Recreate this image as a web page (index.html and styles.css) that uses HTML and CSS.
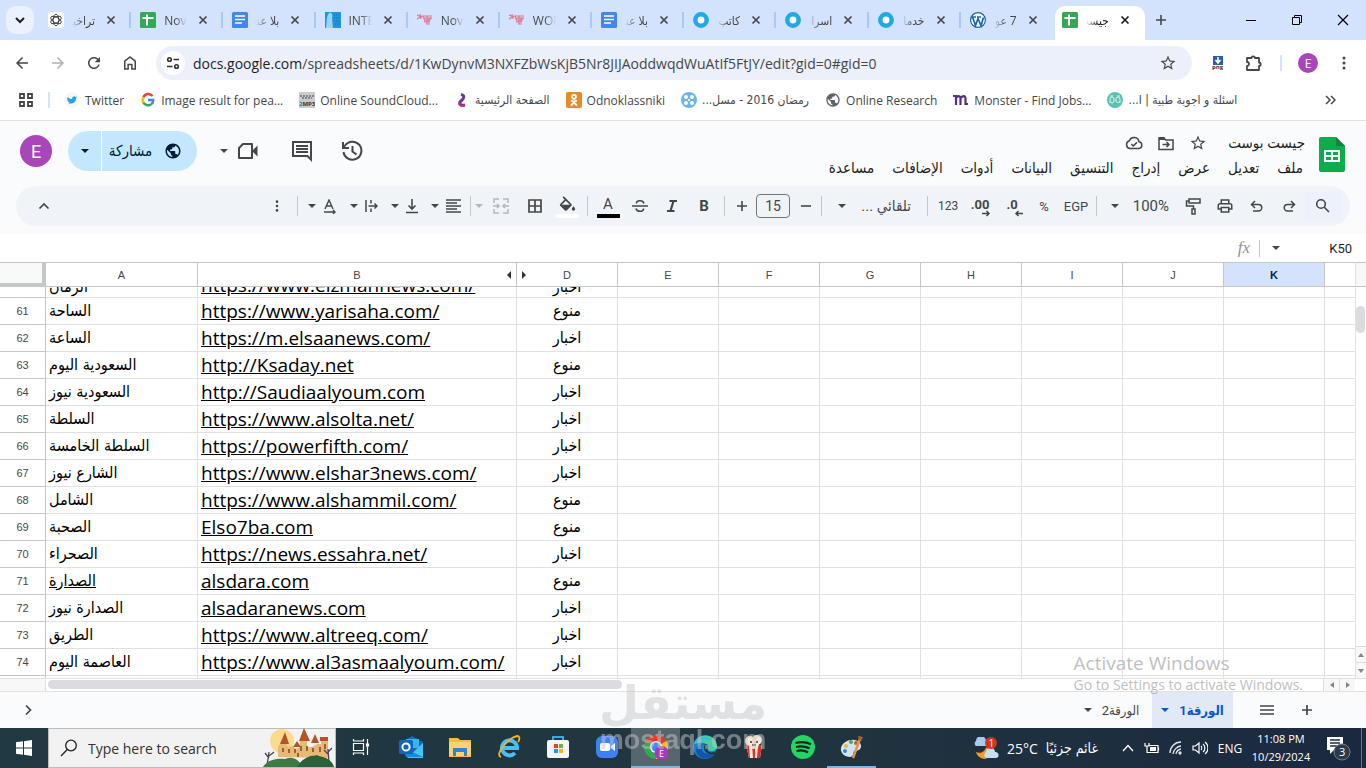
FILE: index.html
```html
<!DOCTYPE html>
<html lang="ar">
<head>
    <meta charset="UTF-8">
    <meta name="viewport" content="width=device-width, initial-scale=1.0">
    <title>جيست بوست</title>
    <link rel="stylesheet" href="styles.css">
</head>
<body>
    <!-- Shared icons -->
    <svg class="sprite" aria-hidden="true">
        <symbol id="close" viewBox="0 0 16 16"><path d="M4.500 4.500l7 7M11.500 4.500l-7 7" fill="none" stroke="currentColor" stroke-width="1.700"/></symbol>
        <symbol id="caret" viewBox="0 0 8 8"><path d="M0 2h8L4 6z" fill="currentColor"/></symbol>
        <symbol id="sheets" viewBox="0 0 16 16"><rect width="16" height="16" rx="1.500" fill="#34a853"/><path d="M7 2.500v11M2.500 6h11" stroke="#fff" stroke-width="2"/></symbol>
        <symbol id="docs" viewBox="0 0 16 16"><rect width="16" height="16" rx="1.500" fill="#4285f4"/><path d="M3 4h10M3 7.500h10M3 11h7" stroke="#fff" stroke-width="1.700"/></symbol>
        <symbol id="ring" viewBox="0 0 16 16"><circle cx="8" cy="8" r="5.700" fill="#fff" stroke="#20a9e6" stroke-width="4.500"/></symbol>
        <symbol id="scrawl" viewBox="0 0 16 16"><path d="M0 3l5 2M0 7l5-3M3 2l1 5M5 4h10M6 6h9l-3 1M6 4l2 5M8 8h6M7 10l6-1M9 12h4M10 4v8M12 6v5" fill="none" stroke="#e0788c" stroke-width="1.200"/></symbol>
        <symbol id="star" viewBox="0 0 24 24"><path fill="currentColor" d="M22 9.240l-7.190-.62L12 2 9.190 8.630 2 9.240l5.460 4.730L5.820 21 12 17.270 18.180 21l-1.630-7.030L22 9.240zM12 15.400l-3.760 2.270 1-4.280-3.320-2.880 4.380-.38L12 6.100l1.710 4.040 4.380.38-3.320 2.880 1 4.280L12 15.400z"/></symbol>
        <symbol id="globe" viewBox="0 0 24 24"><path fill="currentColor" d="M12 2C6.480 2 2 6.480 2 12s4.480 10 10 10 10-4.480 10-10S17.520 2 12 2zm-1 17.930c-3.950-.49-7-3.850-7-7.930 0-.62.08-1.210.21-1.790L9 15v1c0 1.100.9 2 2 2v1.930zm6.900-2.540c-.26-.81-1-1.390-1.900-1.390h-1v-3c0-.55-.45-1-1-1H8v-2h2c.55 0 1-.45 1-1V7h2c1.100 0 2-.9 2-2v-.41c2.930 1.190 5 4.060 5 7.410 0 2.080-.8 3.970-2.100 5.390z"/></symbol>
        <symbol id="dots" viewBox="0 0 16 16"><g fill="currentColor"><circle cx="8" cy="3" r="1.500"/><circle cx="8" cy="8" r="1.500"/><circle cx="8" cy="13" r="1.500"/></g></symbol>
    </svg>

    <!-- Browser tabs -->
    <div class="tabstrip">
        <button class="tab-search" aria-label="Search tabs"><svg width="16" height="16" viewBox="0 0 16 16"><path d="M4 6l4 4 4-4" fill="none" stroke="#1f1f1f" stroke-width="2"/></svg></button>
        <div class="tabs">
            <div class="tab"><svg class="fav" viewBox="0 0 16 16"><rect width="16" height="16" rx="2.500" fill="#fff"/><g fill="none" stroke="#222" stroke-width=".8"><ellipse cx="8" cy="8" rx="2.800" ry="5.800"/><ellipse cx="8" cy="8" rx="2.800" ry="5.800" transform="rotate(60 8 8)"/><ellipse cx="8" cy="8" rx="2.800" ry="5.800" transform="rotate(120 8 8)"/></g></svg><span class="tab-title" dir="rtl">تراخيص</span><button aria-label="Close"><svg><use href="#close"/></svg></button></div>
            <div class="tab"><svg class="fav"><use href="#sheets"/></svg><span class="tab-title">Novem</span><button aria-label="Close"><svg><use href="#close"/></svg></button></div>
            <div class="tab"><svg class="fav"><use href="#docs"/></svg><span class="tab-title" dir="rtl">بلا عنوان</span><button aria-label="Close"><svg><use href="#close"/></svg></button></div>
            <div class="tab"><svg class="fav" viewBox="0 0 16 16"><rect width="16" height="16" fill="#2196dd"/><path d="M1 16C2 10 1 5 4 1c3-1 4 2 3 5l1 10z" fill="#9bd4f5"/><path d="M9 3h6M9 6h6M9 9h6M10 12h5" stroke="#0c6cb0" stroke-dasharray="1 1"/></svg><span class="tab-title">INTER</span><button aria-label="Close"><svg><use href="#close"/></svg></button></div>
            <div class="tab"><svg class="fav"><use href="#scrawl"/></svg><span class="tab-title">Novem</span><button aria-label="Close"><svg><use href="#close"/></svg></button></div>
            <div class="tab"><svg class="fav"><use href="#scrawl"/></svg><span class="tab-title">WORK</span><button aria-label="Close"><svg><use href="#close"/></svg></button></div>
            <div class="tab"><svg class="fav"><use href="#docs"/></svg><span class="tab-title" dir="rtl">بلا عنوان</span><button aria-label="Close"><svg><use href="#close"/></svg></button></div>
            <div class="tab"><svg class="fav"><use href="#ring"/></svg><span class="tab-title" dir="rtl">كاتب</span><button aria-label="Close"><svg><use href="#close"/></svg></button></div>
            <div class="tab"><svg class="fav"><use href="#ring"/></svg><span class="tab-title" dir="rtl">اسراء</span><button aria-label="Close"><svg><use href="#close"/></svg></button></div>
            <div class="tab"><svg class="fav"><use href="#ring"/></svg><span class="tab-title" dir="rtl">خدمات</span><button aria-label="Close"><svg><use href="#close"/></svg></button></div>
            <div class="tab last"><svg class="fav" viewBox="0 0 16 16"><circle cx="8" cy="8" r="7.400" fill="#fff" stroke="#1765ad" stroke-width="1.200"/><path d="M2.500 5l3 8.500L8 6.500l3 7 2.500-8M2 5h4M7 5h4" fill="none" stroke="#1765ad" stroke-width="1.700"/></svg><span class="tab-title" dir="rtl">7 عوامل</span><button aria-label="Close"><svg><use href="#close"/></svg></button></div>
            <div class="tab active"><svg class="fav"><use href="#sheets"/></svg><span class="tab-title" dir="rtl">جيست</span><button aria-label="Close"><svg><use href="#close"/></svg></button></div>
        </div>
        <button class="new-tab" aria-label="New tab"><svg width="16" height="16" viewBox="0 0 16 16"><path d="M8 3v10M3 8h10" stroke="#474747" stroke-width="1.600"/></svg></button>
        <div class="win-controls">
            <button aria-label="Minimize"><svg width="12" height="12"><path d="M1 6.500h10" stroke="#000"/></svg></button>
            <button aria-label="Restore"><svg width="12" height="12"><path d="M1.500 3.500h7v7h-7zM3.500 3.500v-2h7v7h-2" fill="none" stroke="#000"/></svg></button>
            <button aria-label="Close window"><svg width="12" height="12"><path d="M1 1l10 10M11 1L1 11" stroke="#000" stroke-width="1.200"/></svg></button>
        </div>
    </div>

    <!-- Address bar -->
    <div class="navbar">
        <button class="nav-btn" aria-label="Back"><svg viewBox="0 0 24 24"><path fill="currentColor" d="M20 11H7.830l5.590-5.590L12 4l-8 8 8 8 1.410-1.410L7.830 13H20z"/></svg></button>
        <button class="nav-btn off" aria-label="Forward"><svg viewBox="0 0 24 24"><path fill="currentColor" d="M4 11h12.170l-5.590-5.590L12 4l8 8-8 8-1.410-1.410L16.170 13H4z"/></svg></button>
        <button class="nav-btn" aria-label="Reload"><svg viewBox="0 0 24 24"><path fill="currentColor" d="M17.650 6.350C16.200 4.900 14.210 4 12 4c-4.420 0-7.990 3.580-7.990 8s3.570 8 7.990 8c3.730 0 6.840-2.550 7.730-6h-2.080c-.82 2.330-3.040 4-5.650 4-3.310 0-6-2.690-6-6s2.690-6 6-6c1.660 0 3.140.69 4.220 1.780L13 11h7V4z"/></svg></button>
        <button class="nav-btn" aria-label="Home"><svg viewBox="0 0 24 24"><path d="M5 20V9.500L12 4l7 5.500V20h-4.500v-6h-5v6z" fill="none" stroke="currentColor" stroke-width="2"/></svg></button>
        <div class="omnibox">
            <button class="site-info" aria-label="Site information"><svg width="16" height="16" viewBox="0 0 16 16" fill="none" stroke="#333" stroke-width="1.600"><circle cx="4.500" cy="4.500" r="1.800"/><path d="M8.500 4.500H14M2 11.500h5.500"/><circle cx="11.500" cy="11.500" r="1.800"/></svg></button>
            <span class="url" dir="ltr"><b>docs.google.com</b>/spreadsheets/d/1KwDynvM3NXFZbWsKjB5Nr8JIJAoddwqdWuAtIf5FtJY/edit?gid=0#gid=0</span>
            <button class="plain" aria-label="Bookmark"><svg width="18" height="18"><use href="#star"/></svg></button>
        </div>
        <button class="ext" aria-label="Save as PNG"><svg width="14" height="16" viewBox="0 0 14 16"><rect x="2" y="1" width="10" height="9" fill="#2d5fa8"/><path d="M7 2v5M4.500 5L7 8l2.500-3" fill="none" stroke="#fff" stroke-width="1.600"/><text x="1" y="14" font-size="6" font-weight="700" fill="#334">png</text></svg></button>
        <button class="ext" aria-label="Extensions"><svg width="20" height="20" viewBox="0 0 20 20"><path d="M3 5h4.500a1.700 1.700 0 013.400 0H15v4.500a1.700 1.700 0 010 3.400V17H3v-4a2 2 0 000-4z" fill="none" stroke="#474747" stroke-width="1.800" stroke-linejoin="round"/></svg></button>
        <span class="nav-sep"></span>
        <button class="profile" aria-label="Profile">E</button>
        <button class="plain" aria-label="Menu"><svg width="16" height="16"><use href="#dots"/></svg></button>
    </div>

    <!-- Bookmarks -->
    <nav class="bookmarks">
        <button class="plain" aria-label="Tab groups"><svg width="16" height="16" viewBox="0 0 16 16" fill="none" stroke="#474747" stroke-width="1.800"><path d="M2 2h4v4H2zM10 2h4v4h-4zM2 10h4v4H2zM10 10h4v4h-4z"/></svg></button>
        <span class="nav-sep"></span>
        <a href="#"><svg class="fav" viewBox="0 0 16 16"><circle cx="8" cy="8" r="8" fill="#f5f7f8"/><path d="M3.500 5c1.500 1.500 3 2 4.500 2 0-3 2.500-3.200 3.500-2l1.500-.5-1 2c0 4.500-4.500 6-8 4.500l1.500-.8C4 9.500 3.500 9 3.500 8c-.5-1-.3-2 0-3z" fill="#26a4e8"/></svg><span>Twitter</span></a>
        <a href="#"><svg class="fav" viewBox="0 0 16 16" fill="none" stroke-width="2.500"><path d="M12.500 4A5.300 5.300 0 003.400 5.300" stroke="#ea4335"/><path d="M3.400 5.300a5.300 5.300 0 000 5.400" stroke="#fbbc05"/><path d="M3.400 10.700a5.300 5.300 0 008 1.400" stroke="#34a853"/><path d="M11.400 12.100A5 5 0 0013.200 8H8" stroke="#4285f4"/></svg><span>Image result for pea...</span></a>
        <a href="#"><svg class="fav" viewBox="0 0 16 16"><rect width="16" height="16" fill="#c9cbce"/><path d="M1 4h14M3 6h10" stroke="#444" stroke-width="1.200" stroke-dasharray="2 1"/><text x="0" y="14" font-size="6" font-weight="700" fill="#2b78b8">2<tspan fill="#333">MP3</tspan></text></svg><span>Online SoundCloud...</span></a>
        <a href="#"><svg class="fav" viewBox="0 0 16 16"><path d="M7 2.500c5 1 2 5 0 6.500s-2 5 4 4" fill="none" stroke="#69399a" stroke-width="3"/><path d="M5 11c0 3 3 4 6 2" fill="none" stroke="#c1388a" stroke-width="2"/></svg><span dir="rtl" class="ar">الصفحة الرئيسية</span></a>
        <a href="#"><svg class="fav" viewBox="0 0 16 16"><rect width="16" height="16" rx="2" fill="#e88b25"/><g fill="none" stroke="#fff" stroke-width="1.800"><circle cx="8" cy="4.800" r="2"/><path d="M5 8.500c2 1.300 4 1.300 6 0M5 13.500l3-3 3 3"/></g></svg><span>Odnoklassniki</span></a>
        <a href="#"><svg class="fav" viewBox="0 0 16 16"><circle cx="8" cy="8" r="8" fill="#6fb4e8"/><g fill="#fff"><circle cx="5" cy="5" r="2"/><circle cx="11" cy="5" r="2"/><circle cx="5" cy="11" r="2"/><circle cx="11" cy="11" r="2"/><circle cx="8" cy="8" r="1"/></g></svg><span dir="rtl" class="ar">رمضان 2016 - مسل...</span></a>
        <a href="#"><svg class="fav globe"><use href="#globe"/></svg><span>Online Research</span></a>
        <a href="#"><svg class="fav" viewBox="0 0 16 16"><path d="M0 4h3v9M3 6c1-2 4-3 4.500 0v7M8 6c1-2 4-3 4.500 0v6H15" fill="none" stroke="#52308c" stroke-width="2.200"/></svg><span>Monster - Find Jobs...</span></a>
        <a href="#"><svg class="fav" viewBox="0 0 16 16"><circle cx="8" cy="8" r="8" fill="#59c2b3"/><path d="M3 11V7a2 2 0 014 0v2a2 2 0 01-4 0M9 9V7a2 2 0 014 0v4M9 8a2 2 0 004 1M3 4h3M10 4h3" fill="none" stroke="#d9f2ee"/></svg><span dir="rtl" class="ar">اسئلة و اجوبة طبية | ا...</span></a>
        <button class="plain more-marks" aria-label="More bookmarks"><svg width="12" height="12" viewBox="0 0 12 12"><path d="M2 2l4 4-4 4M7 2l4 4-4 4" fill="none" stroke="#474747" stroke-width="1.500"/></svg></button>
    </nav>

    <!-- Document header -->
    <header class="doc-header" dir="rtl">
        <div class="doc-top">
            <svg class="logo" width="26" height="35" viewBox="0 0 26 35"><path d="M2 0h15l9 9v24a2 2 0 01-2 2H2a2 2 0 01-2-2V2a2 2 0 012-2z" fill="#0cac4b"/><path d="M17 0l9 9h-9z" fill="#11833b"/><path d="M5 13h16v12H5z" fill="#fff"/><path d="M7 15h5v3H7zM14 15h5v3h-5zM7 20h5v3H7zM14 20h5v3h-5z" fill="#0cac4b"/></svg>
            <div class="doc-info">
                <div class="doc-title">
                    <h1>جيست بوست</h1>
                    <button class="plain" aria-label="تمييز بنجمة"><svg width="18" height="18"><use href="#star"/></svg></button>
                    <button class="plain" aria-label="نقل"><svg width="18" height="18" viewBox="0 0 18 18"><path d="M2 4h5l1.500 2H16v9.500H2zM5.500 10.500H12M9.500 8l2.500 2.500L9.500 13" fill="none" stroke="currentColor" stroke-width="1.500"/><path d="M2 3h5l2 3H2z" fill="currentColor"/></svg></button>
                    <button class="plain" aria-label="حالة المستند"><svg width="18" height="18" viewBox="0 0 18 18"><path d="M5 14.500a4 4 0 01-.6-7.800A5 5 0 0114 7.800a3.400 3.400 0 010 6.700zM6.300 10l2 2 3.600-3.600" fill="none" stroke="currentColor" stroke-width="1.500"/></svg></button>
                </div>
                <nav class="menus">
                    <button>ملف</button><button>تعديل</button><button>عرض</button><button>إدراج</button><button>التنسيق</button><button>البيانات</button><button>أدوات</button><button>الإضافات</button><button>مساعدة</button>
                </nav>
            </div>
            <div class="doc-actions">
                <button class="plain" aria-label="سجل الإصدارات"><svg width="24" height="24" viewBox="0 0 24 24" fill="none" stroke="currentColor" stroke-width="2"><path d="M3.500 13a9 9 0 101.500-6.500L3 9M3 3v6h6"/><path d="M12.500 7v5.500l4 3"/></svg></button>
                <button class="plain" aria-label="التعليقات"><svg width="24" height="24" viewBox="0 0 24 24"><path d="M3 3h18v17.500L17.500 17H3z" fill="none" stroke="currentColor" stroke-width="2"/><path d="M6 7h12M6 10h12M6 13h12" stroke="currentColor" stroke-width="2"/></svg></button>
                <button class="plain meet" aria-label="مكالمة"><svg width="24" height="24" viewBox="0 0 24 24"><path d="M7 5h9v14H3V9z" fill="none" stroke="currentColor" stroke-width="2" stroke-linejoin="round"/><path d="M16 12l5.500-5.500v11z" fill="currentColor"/></svg><svg class="caret"><use href="#caret"/></svg></button>
                <div class="share">
                    <button class="share-main"><svg width="18" height="18"><use href="#globe"/></svg>مشاركة</button>
                    <button class="share-more" aria-label="خيارات المشاركة"><svg class="caret"><use href="#caret"/></svg></button>
                </div>
                <button class="avatar" aria-label="الحساب">E</button>
            </div>
        </div>

        <div class="toolbar">
            <button class="tool search" aria-label="بحث"><svg width="16" height="16" viewBox="0 0 16 16" fill="none" stroke="currentColor" stroke-width="1.600"><circle cx="6" cy="6" r="4.300"/><path d="M9.300 9.300L14 14"/></svg></button>
            <button class="tool" aria-label="إعادة"><svg width="14" height="14" viewBox="0 0 14 14"><path d="M9 2l3.500 3.500L9 9M12.500 5.500h-7a3.200 3.200 0 000 6.500H11" fill="none" stroke="currentColor" stroke-width="1.500"/></svg></button>
            <button class="tool" aria-label="تراجع"><svg width="14" height="14" viewBox="0 0 14 14"><path d="M5 2L1.500 5.500 5 9M1.500 5.500h7a3.200 3.200 0 010 6.500H3" fill="none" stroke="currentColor" stroke-width="1.500"/></svg></button>
            <button class="tool" aria-label="طباعة"><svg width="18" height="18" viewBox="0 0 24 24"><path fill="currentColor" d="M19 8h-1V3H6v5H5c-1.660 0-3 1.340-3 3v6h4v4h12v-4h4v-6c0-1.660-1.340-3-3-3zM8 5h8v3H8V5zm8 12v2H8v-4h8v2zm2-2v-2H6v2H4v-4c0-.55.45-1 1-1h14c.55 0 1 .45 1 1v4h-2z"/></svg></button>
            <button class="tool" aria-label="نسخ التنسيق"><svg width="18" height="18" viewBox="0 0 18 18" fill="none" stroke="currentColor" stroke-width="1.500"><path d="M5 2h11v4H5zM5 4H2.500v5h7v3M8 12h3v5H8z"/></svg></button>
            <label class="picker zoom"><select aria-label="تكبير"><option>100%</option></select><svg class="caret"><use href="#caret"/></svg></label>
            <span class="sep"></span>
            <button class="tool txt" aria-label="عملة">EGP</button>
            <button class="tool txt" aria-label="نسبة">%</button>
            <button class="tool dec" aria-label="إنقاص المنازل العشرية"><span dir="ltr">.0</span><svg width="9" height="7" viewBox="0 0 9 7"><path d="M9 3.500H2M4.500 1L2 3.500 4.500 6" fill="none" stroke="currentColor" stroke-width="1.500"/></svg></button>
            <button class="tool dec" aria-label="زيادة المنازل العشرية"><span dir="ltr">.00</span><svg width="9" height="7" viewBox="0 0 9 7"><path d="M0 3.500h7M4.500 1L7 3.500 4.500 6" fill="none" stroke="currentColor" stroke-width="1.500"/></svg></button>
            <button class="tool num" aria-label="تنسيقات أخرى">123</button>
            <span class="sep"></span>
            <label class="picker font"><select aria-label="الخط"><option>تلقائي ...</option></select><svg class="caret"><use href="#caret"/></svg></label>
            <span class="sep"></span>
            <div class="size">
                <button aria-label="تصغير الخط"><svg width="12" height="12"><path d="M1 6h10" stroke="currentColor" stroke-width="1.600"/></svg></button>
                <input type="text" value="15" aria-label="حجم الخط">
                <button aria-label="تكبير الخط"><svg width="12" height="12"><path d="M1 6h10M6 1v10" stroke="currentColor" stroke-width="1.600"/></svg></button>
            </div>
            <span class="sep"></span>
            <button class="tool bold" aria-label="غامق">B</button>
            <button class="tool" aria-label="مائل"><svg width="14" height="14" viewBox="0 0 14 14"><path d="M4.500 2H12M2 12h7.500M8.500 2l-3 10" stroke="currentColor" stroke-width="2.200"/></svg></button>
            <button class="tool" aria-label="يتوسطه خط"><svg width="16" height="16" viewBox="0 0 16 16" fill="none" stroke="currentColor" stroke-width="1.600"><path d="M0 8h16M12 5.500C11 1.500 4 2 4.500 5.500M4 10.500c1 4 8 3.500 7.500 0"/></svg></button>
            <button class="tool stack" aria-label="لون النص"><span>A</span><i class="black"></i></button>
            <span class="sep"></span>
            <button class="tool stack" aria-label="لون التعبئة"><svg width="17" height="16" viewBox="2 0 20 18"><path fill="currentColor" d="M16.560 8.940L7.620 0 6.210 1.410l2.380 2.380-5.150 5.150c-.59.59-.59 1.540 0 2.120l5.500 5.500c.29.29.68.44 1.060.44s.77-.15 1.060-.44l5.500-5.500c.59-.58.59-1.530 0-2.120zM5.210 10L10 5.210 14.790 10H5.210zM19 11.500s-2 2.170-2 3.500c0 1.100.9 2 2 2s2-.9 2-2c0-1.330-2-3.500-2-3.500z"/></svg><i class="white"></i></button>
            <button class="tool" aria-label="الحدود"><svg width="14" height="14"><path d="M1 1h12v12H1zM7 1v12M1 7h12" fill="none" stroke="currentColor" stroke-width="1.700"/></svg></button>
            <button class="tool merge" aria-label="دمج الخلايا"><svg width="16" height="16" viewBox="0 0 16 16" fill="none" stroke="currentColor" stroke-width="1.500"><path d="M6 1H1v4M10 1h5v4M1 11v4h5M15 11v4h-5M0 8h5M16 8h-5M4 6l2 2-2 2M12 6l-2 2 2 2"/></svg><svg class="caret"><use href="#caret"/></svg></button>
            <span class="sep"></span>
            <button class="tool duo" aria-label="محاذاة أفقية"><svg width="15" height="16"><path d="M0 2h15M0 5h11M0 8h15M0 11h11M0 14h15" stroke="currentColor" stroke-width="1.600"/></svg><svg class="caret"><use href="#caret"/></svg></button>
            <button class="tool duo" aria-label="محاذاة عمودية"><svg width="12" height="15"><path d="M6 0v10M2.500 6.500L6 10l3.500-3.500M0 13.500h12" fill="none" stroke="currentColor" stroke-width="1.600"/></svg><svg class="caret"><use href="#caret"/></svg></button>
            <button class="tool duo" aria-label="التفاف النص"><svg width="13" height="12" viewBox="0 0 13 12"><path d="M1 0v12M6 0v3.500M6 8.500V12M3.500 6H12M9.500 3.500L12 6 9.500 8.500" fill="none" stroke="currentColor" stroke-width="1.500"/></svg><svg class="caret"><use href="#caret"/></svg></button>
            <button class="tool duo" aria-label="تدوير النص"><svg width="14" height="15" viewBox="0 0 14 15"><path d="M2 10L6 1l4 9M3.500 7h5M1 13h11M10 11l2 2-2 2" fill="none" stroke="currentColor" stroke-width="1.400"/></svg><svg class="caret"><use href="#caret"/></svg></button>
            <span class="sep"></span>
            <button class="tool" aria-label="المزيد"><svg width="14" height="14"><use href="#dots"/></svg></button>
            <button class="tool collapse" aria-label="إخفاء القوائم"><svg width="12" height="12"><path d="M1.500 8.500L6 4l4.500 4.500" fill="none" stroke="currentColor" stroke-width="1.700"/></svg></button>
        </div>
    </header>

    <div class="formula" dir="rtl">
        <input class="cell-name" type="text" value="K50" aria-label="مربع الاسم">
        <button class="plain" aria-label="النطاقات"><svg class="caret"><use href="#caret"/></svg></button>
        <span class="sep"></span>
        <span class="fx">fx</span>
    </div>

    <!-- Sheet -->
    <main class="sheet">
        <div class="grid">
            <table>
                <colgroup><col class="c-num"><col class="c-a"><col class="c-b"><col span="9"></colgroup>
                <thead>
                    <tr><th class="corner"></th><th>A</th><th>B<svg class="hide-mark" width="4" height="8"><path d="M4 0v8L0 4z"/></svg></th><th><svg class="show-mark" width="4" height="8"><path d="M0 0v8l4-4z"/></svg>D</th><th>E</th><th>F</th><th>G</th><th>H</th><th>I</th><th>J</th><th class="selected">K</th><th></th></tr>
                </thead>
                <tbody>
                    <tr class="cut"><th></th><td><div>الزمان</div></td><td><div><a href="#">https://www.elzmannews.com/</a></div></td><td><div>اخبار</div></td><td></td><td></td><td></td><td></td><td></td><td></td><td></td><td></td></tr>
                    <tr><th>61</th><td>الساحة</td><td><a href="#">https://www.yarisaha.com/</a></td><td>منوع</td><td></td><td></td><td></td><td></td><td></td><td></td><td></td><td></td></tr>
                    <tr><th>62</th><td>الساعة</td><td><a href="#">https://m.elsaanews.com/</a></td><td>اخبار</td><td></td><td></td><td></td><td></td><td></td><td></td><td></td><td></td></tr>
                    <tr><th>63</th><td>السعودية اليوم</td><td><a href="#">http://Ksaday.net</a></td><td>منوع</td><td></td><td></td><td></td><td></td><td></td><td></td><td></td><td></td></tr>
                    <tr><th>64</th><td>السعودية نيوز</td><td><a href="#">http://Saudiaalyoum.com</a></td><td>اخبار</td><td></td><td></td><td></td><td></td><td></td><td></td><td></td><td></td></tr>
                    <tr><th>65</th><td>السلطة</td><td><a href="#">https://www.alsolta.net/</a></td><td>اخبار</td><td></td><td></td><td></td><td></td><td></td><td></td><td></td><td></td></tr>
                    <tr><th>66</th><td>السلطة الخامسة</td><td><a href="#">https://powerfifth.com/</a></td><td>اخبار</td><td></td><td></td><td></td><td></td><td></td><td></td><td></td><td></td></tr>
                    <tr><th>67</th><td>الشارع نيوز</td><td><a href="#">https://www.elshar3news.com/</a></td><td>اخبار</td><td></td><td></td><td></td><td></td><td></td><td></td><td></td><td></td></tr>
                    <tr><th>68</th><td>الشامل</td><td><a href="#">https://www.alshammil.com/</a></td><td>منوع</td><td></td><td></td><td></td><td></td><td></td><td></td><td></td><td></td></tr>
                    <tr><th>69</th><td>الصحبة</td><td><a href="#">Elso7ba.com</a></td><td>منوع</td><td></td><td></td><td></td><td></td><td></td><td></td><td></td><td></td></tr>
                    <tr><th>70</th><td>الصحراء</td><td><a href="#">https://news.essahra.net/</a></td><td>اخبار</td><td></td><td></td><td></td><td></td><td></td><td></td><td></td><td></td></tr>
                    <tr><th>71</th><td><a href="#">الصدارة</a></td><td><a href="#">alsdara.com</a></td><td>منوع</td><td></td><td></td><td></td><td></td><td></td><td></td><td></td><td></td></tr>
                    <tr><th>72</th><td>الصدارة نيوز</td><td><a href="#">alsadaranews.com</a></td><td>اخبار</td><td></td><td></td><td></td><td></td><td></td><td></td><td></td><td></td></tr>
                    <tr><th>73</th><td>الطريق</td><td><a href="#">https://www.altreeq.com/</a></td><td>اخبار</td><td></td><td></td><td></td><td></td><td></td><td></td><td></td><td></td></tr>
                    <tr><th>74</th><td>العاصمة اليوم</td><td><a href="#">https://www.al3asmaalyoum.com/</a></td><td>اخبار</td><td></td><td></td><td></td><td></td><td></td><td></td><td></td><td></td></tr>
                    <tr><th></th><td></td><td></td><td></td><td></td><td></td><td></td><td></td><td></td><td></td><td></td><td></td></tr>
                </tbody>
            </table>
        </div>
        <div class="vscroll">
            <div class="vtop"></div>
            <div class="vthumb"></div>
            <button aria-label="Up"><svg width="6" height="4"><path d="M0 4h6L3 0z"/></svg></button>
            <button aria-label="Down"><svg width="6" height="4"><path d="M0 0h6L3 4z"/></svg></button>
        </div>
    </main>
    <div class="hscroll">
        <div class="hstart"></div>
        <div class="hthumb"></div>
        <button aria-label="Left"><svg width="4" height="6"><path d="M4 0v6L0 3z"/></svg></button>
        <button aria-label="Right"><svg width="4" height="6"><path d="M0 0v6l4-3z"/></svg></button>
    </div>

    <footer class="sheetbar" dir="rtl">
        <button class="bar-btn" aria-label="إضافة ورقة"><svg width="12" height="12"><path d="M6 1v10M1 6h10" stroke="currentColor" stroke-width="1.700"/></svg></button>
        <button class="bar-btn" aria-label="كل الأوراق"><svg width="14" height="12"><path d="M0 2h14M0 6h14M0 10h14" stroke="currentColor" stroke-width="1.500"/></svg></button>
        <button class="sheet-tab current">الورقة1<svg class="caret"><use href="#caret"/></svg></button>
        <button class="sheet-tab">الورقة2<svg class="caret"><use href="#caret"/></svg></button>
        <button class="bar-btn panel-toggle" aria-label="اللوحة الجانبية"><svg width="12" height="12"><path d="M4 1.500L8.500 6 4 10.500" fill="none" stroke="currentColor" stroke-width="1.700"/></svg></button>
    </footer>

    <!-- Windows taskbar -->
    <div class="taskbar">
        <button class="start" aria-label="Start"><svg width="16" height="16"><path d="M0 2.300L7 1.300v6.200H0zM8 1.200L16 0v7.500H8zM0 8.500h7v6.300l-7-1zM8 8.500h8V16l-8-1.200z" fill="#fff"/></svg></button>
        <label class="win-search">
            <svg width="18" height="18" viewBox="0 0 18 18" fill="none" stroke="#222" stroke-width="1.300"><circle cx="11" cy="6.500" r="5.300"/><path d="M7.300 10.500L1 17"/></svg>
            <input type="text" placeholder="Type here to search" aria-label="Search">
            <svg class="castle" width="72" height="39" viewBox="0 0 72 39"><circle cx="19" cy="13" r="12" fill="#fbdc8d"/><path d="M15 29V19l3-5h4l3 5 5-1 3 3 4-2v-6h7v6h5l5-3h4v-6h7v20z" fill="#e9b874"/><path d="M17 16l5-12 4 12zM36 13l5-13 6 13zM48 15l4-9 4 9zM57 9h8v4h-8zM30 19l4-6 4 6z" fill="#b3542b"/><path d="M20 20v4M26 21v4M32 21v4M38 18v5M44 18v5M50 20v4M57 19v5M62 16v5M35 25v4M54 27v4" stroke="#7a4628" stroke-width="1.500"/><path d="M4 38l2-14m0 6l-4-5m4 3l5-4M66 34l-1-13m0 5l-4-4m4 2l4-4" stroke="#4b4058" stroke-width="1.300" fill="none"/><path d="M0 39c4-7 14-9 22-8 8-3 13 0 18 8z" fill="#3e7a44"/><path d="M34 39c6-10 16-14 26-10 7 2 10 6 11 10z" fill="#2c6038"/></svg>
        </label>
        <div class="apps">
            <button class="app view" aria-label="Task View"><svg width="18" height="18" viewBox="0 0 18 18" fill="none" stroke="#fff" stroke-width="1.200"><path d="M1.500 5.500h10v7h-10zM1.500 1v2h10V1M1.500 17v-2h10v2M15.500 1v16"/><path d="M14.500 6h2v2h-2z" fill="#fff"/></svg></button>
            <button class="app" aria-label="Outlook"><svg viewBox="0 0 24 24"><path d="M5 6l8-5 11 6v14H6z" fill="#1769b8"/><path d="M7 4h13v9H7z" fill="#35b6ef"/><path d="M24 8v15H8z" fill="#46c3f3"/><path d="M7 14l17 8H7z" fill="#168ad8"/><rect y="5" width="14" height="14" rx="1.500" fill="#1066bd"/><circle cx="7" cy="12" r="3.600" fill="none" stroke="#fff" stroke-width="2"/></svg></button>
            <button class="app" aria-label="File Explorer"><svg viewBox="0 0 24 24"><path d="M1 3h9l2 2h11v17H1z" fill="#f8b842"/><path d="M1 7h22v14H1z" fill="#ffd070"/><path d="M5 13h14v8h-3v-4H8v4H5z" fill="#2d86d2"/></svg></button>
            <button class="app" aria-label="Internet Explorer"><svg viewBox="0 0 24 24" fill="none"><path d="M5 13h15a7.500 7.500 0 10-2 5" stroke="#4dbdf2" stroke-width="4"/><path d="M4 22C-3 20 11 3 20 1c4 0 2 5 1 6" stroke="#f1b326" stroke-width="1.800"/></svg></button>
            <button class="app" aria-label="Microsoft Store"><svg viewBox="0 0 24 24"><path d="M7 6V2h10v4" fill="none" stroke="#38a9e2" stroke-width="2"/><rect x="1" y="5" width="22" height="18" rx="2" fill="#f5f5f5"/><path fill="#e34224" d="M8 9h4v4H8z"/><path fill="#78b41f" d="M13 9h4v4h-4z"/><path fill="#219bdb" d="M8 14h4v4H8z"/><path fill="#f6b517" d="M13 14h4v4h-4z"/></svg></button>
            <button class="app" aria-label="Zoom"><svg viewBox="0 0 24 24"><rect x="1" y="1" width="22" height="22" rx="6" fill="#3b82f6"/><rect x="5" y="8" width="10" height="8" rx="2" fill="#fff"/><path d="M16 11l4-3v8l-4-3z" fill="#fff"/></svg></button>
            <button class="app running open" aria-label="Chrome"><svg viewBox="0 0 24 24"><circle cx="12" cy="12" r="12" fill="#34a853"/><path d="M12 12L1.600 6A12 12 0 0122.400 6z" fill="#e33b2e"/><path d="M12 12l10.400-6A12 12 0 0112 24z" fill="#fbbc05"/><circle cx="12" cy="12" r="6" fill="#fff"/><circle cx="12" cy="12" r="4.500" fill="#4285f4"/><circle cx="17.500" cy="18" r="7" fill="#a63ab8"/><text x="15" y="21.500" font-size="9" fill="#fff">E</text></svg></button>
            <button class="app" aria-label="Edge"><svg viewBox="0 0 24 24"><circle cx="12" cy="12" r="12" fill="#1583cf"/><path d="M1 9C5-3 23-2 24 11c0 5-6 6-9 4 3-4-2-10-14-6z" fill="#46cda0"/><path d="M1 9C4 1 15 0 18 5 12 4 4 5 1 9z" fill="#35bde5"/><path d="M10 9c-4 5 0 13 12 9-3 6-12 8-17 2-4-5-1-11 5-11z" fill="#1155a6"/><path d="M12 9c4 0 4 4 2 6 2 3 6 3 9 1l-1 3C13 21 9 14 12 9z" fill="#203441"/></svg></button>
            <button class="app" aria-label="Popcorn"><svg viewBox="0 0 24 24"><path d="M4 10h16l-2 13H7z" fill="#f8ece2"/><path d="M4 10h3l1 13H7zM10 10h3v13h-2zM16 10h4l-2 13h-3z" fill="#d9302c"/><g fill="#f3e9d8"><circle cx="8" cy="6" r="5"/><circle cx="15" cy="5" r="5"/><circle cx="12" cy="9" r="5"/></g><path d="M8 7h2M14 7h2M10 10h4" stroke="#3f2c27" stroke-width="1.500"/></svg></button>
            <button class="app" aria-label="Spotify"><svg viewBox="0 0 24 24"><circle cx="12" cy="12" r="12" fill="#22d565"/><path d="M4.500 8c5-1.500 11-1 15.500 1.300M5 12c5-1.200 9-.7 13.500 1.300M5.500 16c4-1 8-.5 11.500 1.200" fill="none" stroke="#10231a" stroke-width="2.200"/></svg></button>
            <button class="app running" aria-label="Paint"><svg viewBox="0 0 24 24"><path d="M1 13C3 5 15 2 20 8c3 5-1 8-5 8-3 0 0 5-5 6-5 0-10-4-9-9z" fill="#cfe5f4"/><circle cx="6" cy="11" r="2" fill="#eeb434"/><circle cx="11" cy="7" r="2" fill="#56a74c"/><circle cx="5" cy="16" r="2" fill="#3e83d0"/><circle cx="16" cy="8" r="2" fill="#e14c33"/><path d="M13 23l7-19" stroke="#e19645" stroke-width="2.500"/><path d="M19 5l-1-4 5 1-2 4z" fill="#a96432"/></svg></button>
        </div>
        <div class="tray">
            <button class="weather"><svg width="26" height="22" viewBox="0 0 26 22"><path d="M3 15c4 2 9 0 10-5 5 4 5 10-1 12-4 0-8-3-9-7z" fill="#f39b25"/><path d="M3 9a3 3 0 010-5 5 5 0 0110 0 3 3 0 010 5z" fill="#a8cdec"/><path d="M13 21a3.500 3.500 0 010-6 4.500 4.500 0 019 0 3 3 0 011 6z" fill="#c5dff4"/><circle cx="18" cy="6" r="6" fill="#d13624"/><text x="15.500" y="9.500" font-size="10" fill="#fff">1</text></svg><span>25°C</span><span dir="rtl" class="ar">غائم جزئيًا</span></button>
            <button aria-label="Hidden icons"><svg width="12" height="12"><path d="M1 9l5-5.500L11 9" fill="none" stroke="#fff" stroke-width="1.300"/></svg></button>
            <button aria-label="Battery"><svg width="16" height="12"><path d="M5 3.500h9v7H3V8M14.500 5.500v3M1 1v3h4V1M3 4v4" fill="none" stroke="#fff" stroke-width="1.200"/><path d="M6 5h6v4H6z" fill="#fff"/></svg></button>
            <button aria-label="Network"><svg width="14" height="14" fill="none" stroke="#dfe5ea" stroke-width="1.300"><path d="M1 12A11 11 0 0112 1M4 13a9 9 0 018-8M7 13a6 6 0 015-5"/><circle cx="11" cy="12" r="1" fill="#fff"/></svg></button>
            <button aria-label="Volume"><svg width="16" height="14" fill="none" stroke="#fff" stroke-width="1.200"><path d="M1 5h2.500L7 2v10L3.500 9H1zM9 5c1 1 1 3 0 4M11 3c2.500 2 2.500 6 0 8M13 1c4 3 4 9 0 12"/></svg></button>
            <button class="lang">ENG</button>
            <button class="clock"><span>11:08 PM</span><span>10/29/2024</span></button>
            <button class="notes" aria-label="Notifications"><svg width="26" height="26" viewBox="0 0 26 26"><path d="M2 2h16v13H9l-4 4v-4H2z" fill="#fff"/><path d="M5 5h10M5 8h10M5 11h7" stroke="#1c2c42" stroke-width="1.300"/><circle cx="17" cy="17" r="8" fill="#2c3b4b" stroke="#738091"/><text x="14" y="21" font-size="11" fill="#fff">3</text></svg></button>
            <button class="desktop-line" aria-label="Show desktop"></button>
        </div>
    </div>

    <!-- Overlays -->
    <div class="activate"><p>Activate Windows</p><small>Go to Settings to activate Windows.</small></div>
    <div class="watermark"><strong>مستقل</strong><span>mostaql.com</span></div>
</body>
</html>
```
FILE: styles.css
```css
* {
    box-sizing: border-box;
}
body {
    margin: 0;
    height: 100vh;
    display: flex;
    flex-direction: column;
    overflow: hidden;
    background: #fff;
    color: #474747;
    font-family: "Open Sans", "DejaVu Sans Condensed", sans-serif;
    font-size: 12px;
}
button, input, select {
    margin: 0;
    padding: 0;
    border: none;
    background: none;
    color: inherit;
    font-family: inherit;
    font-size: inherit;
}
button {
    display: flex;
    align-items: center;
    justify-content: center;
    flex: none;
}
a {
    color: inherit;
    text-decoration: none;
}
svg {
    flex: none;
}
.sprite {
    position: absolute;
    width: 0;
    height: 0;
}
.fav {
    width: 16px;
    height: 16px;
}
.caret {
    width: 8px;
    height: 8px;
}

/* Tabs */
.tabstrip {
    height: 40px;
    flex: none;
    display: flex;
    align-items: center;
    background: #d3e3fd;
}
.tab-search {
    width: 28px;
    height: 28px;
    margin: 0 5px 0 6px;
    border-radius: 10px;
    background: #ebf1fd;
}
.tabs {
    flex: 1;
    display: flex;
    align-self: stretch;
}
.tab {
    flex: 1 1 0;
    min-width: 0;
    display: flex;
    align-items: center;
    padding-left: 9px;
    position: relative;
}
.tab::after {
    content: "";
    position: absolute;
    right: 0;
    width: 2px;
    height: 16px;
    background: #a8c7fa;
}
.tab.last::after, .tab.active::after {
    display: none;
}
.tab-title {
    flex: none;
    width: 23px;
    margin: 0 8px;
    overflow: hidden;
    white-space: nowrap;
    -webkit-mask-image: linear-gradient(to right, #000 50%, transparent);
    mask-image: linear-gradient(to right, #000 50%, transparent);
}
.tab-title[dir="rtl"] {
    -webkit-mask-image: linear-gradient(to left, #000 50%, transparent);
    mask-image: linear-gradient(to left, #000 50%, transparent);
}
.tab svg {
    width: 16px;
    height: 16px;
}
.tab.active {
    margin: 6px 0 0 2px;
    padding: 0 0 6px 7px;
    border-radius: 10px 10px 0 0;
    background: #fff;
    color: #1f1f1f;
}
.new-tab {
    width: 32px;
    height: 28px;
}
.win-controls {
    display: flex;
    margin-left: 51px;
}
.win-controls button {
    width: 46px;
    height: 40px;
}

/* Address bar */
.navbar {
    height: 46px;
    flex: none;
    display: flex;
    align-items: center;
    padding: 0 14px 0 4px;
}
.nav-btn {
    width: 36px;
    height: 34px;
}
.nav-btn svg {
    width: 18px;
    height: 18px;
}
.nav-btn.off {
    color: #b0b0b0;
}
.omnibox {
    flex: 1;
    min-width: 0;
    height: 34px;
    margin: 0 8px;
    padding: 0 15px 0 5px;
    display: flex;
    align-items: center;
    border-radius: 17px;
    background: #ebf0fa;
}
.site-info {
    width: 24px;
    height: 24px;
    border-radius: 12px;
    background: #fff;
}
.url {
    flex: 1;
    min-width: 0;
    margin-left: 8px;
    overflow: hidden;
    white-space: nowrap;
    font-size: 14px;
}
.url b {
    color: #1f1f1f;
    font-weight: 400;
}
.ext {
    width: 36px;
}
.nav-sep {
    width: 2px;
    height: 16px;
    flex: none;
    background: #d3e3fd;
}
.navbar .nav-sep {
    margin-left: 8px;
}
.profile {
    width: 20px;
    height: 20px;
    margin: 0 18px 0 16px;
    border-radius: 10px;
    background: #a846ba;
    color: #fff;
}

/* Bookmarks */
.bookmarks {
    height: 35px;
    flex: none;
    display: flex;
    align-items: center;
    gap: 16px;
    padding: 0 30px 6px 18px;
    border-bottom: 1px solid #dfe1e5;
}
.bookmarks .nav-sep {
    margin: 0 -2px;
}
.bookmarks a {
    display: flex;
    align-items: center;
    gap: 5px;
    white-space: nowrap;
}
.bookmarks .globe {
    color: #5f6368;
}
.ar {
    font-family: "DejaVu Sans Condensed", sans-serif;
    font-size: 12px;
}
.more-marks {
    margin-left: auto;
}

/* Document header */
.doc-header {
    flex: none;
    padding: 0 16px 8px;
    background: #f9fbfd;
    color: #444746;
    font-family: Roboto, "DejaVu Sans Condensed", sans-serif;
}
.doc-top {
    height: 65px;
    display: flex;
    padding: 0 5px 0 4px;
}
.logo {
    margin-top: 16px;
}
.doc-info {
    flex: 1;
    margin-right: 14px;
    padding-top: 10px;
}
.doc-title {
    display: flex;
    align-items: center;
    gap: 14px;
    height: 24px;
}
h1 {
    margin: 0 0 0 7px;
    color: #1f1f1f;
    font-size: 15px;
    font-weight: 400;
}
.menus {
    display: flex;
    gap: 18px;
    margin-right: 2px;
    height: 26px;
    color: #1f1f1f;
    font-size: 15px;
}
.doc-actions {
    display: flex;
    align-items: center;
    height: 60px;
}
.doc-actions > .plain {
    width: 50px;
}
.doc-actions > .meet {
    width: 46px;
    margin: 0 14px 0 20px;
    gap: 8px;
}
.share {
    display: flex;
    height: 40px;
    color: #001d35;
    font-size: 15px;
}
.share-main {
    gap: 12px;
    padding: 0 17px 0 9px;
    width: 95px;
    border-radius: 0 20px 20px 0;
    background: #c2e7ff;
}
.share-more {
    width: 33px;
    margin-right: 1px;
    border-radius: 20px 0 0 20px;
    background: #c2e7ff;
}
.avatar {
    width: 32px;
    height: 32px;
    margin-right: 16px;
    border-radius: 16px;
    background: #a846ba;
    color: #fff;
    font-size: 18px;
}

/* Toolbar */
.toolbar {
    height: 40px;
    display: flex;
    align-items: center;
    padding: 0 9px 0 12px;
    border-radius: 20px;
    background: #f0f4f9;
}
.tool {
    width: 32px;
    height: 28px;
}
.tool.search {
    width: 36px;
    background: #edf1fb;
}
.sep {
    width: 1px;
    height: 20px;
    margin: 0 4px;
    flex: none;
    background: #c7c7c7;
}
.picker {
    display: flex;
    align-items: center;
    flex: none;
}
.picker select {
    appearance: none;
    text-align: right;
}
.zoom {
    width: 76px;
    padding-right: 8px;
    gap: 13px;
    font-size: 15px;
}
.font {
    width: 97px;
    padding: 0 12px;
    justify-content: space-between;
    font-size: 15px;
}
.txt {
    font-size: 13px;
}
.num {
    font-size: 12px;
}
.dec {
    position: relative;
    padding-bottom: 4px;
    font-size: 13px;
    font-weight: 700;
}
.dec svg {
    position: absolute;
    right: 5px;
    bottom: 3px;
}
.size {
    width: 88px;
    display: flex;
    align-items: center;
    padding-right: 5px;
}
.size button {
    width: 12px;
    height: 24px;
}
.size input {
    width: 34px;
    height: 24px;
    margin: 0 10px 0 8px;
    border: 1px solid #747775;
    border-radius: 4px;
    text-align: center;
    font-size: 14px;
}
.bold {
    font-size: 15px;
    font-weight: 700;
}
.stack {
    flex-direction: column;
    justify-content: flex-end;
    height: 24px;
    font-size: 15px;
    line-height: 16px;
}
.stack i {
    width: 23px;
    height: 4px;
    margin-top: 2px;
}
.black {
    background: #000;
}
.white {
    background: #fff;
}
.merge {
    width: 44px;
    gap: 10px;
    justify-content: flex-end;
    color: #b4b7ba;
}
.duo {
    width: 41px;
    gap: 7px;
}
.collapse {
    margin-right: auto;
}

/* Formula bar */
.formula {
    height: 28px;
    flex: none;
    display: flex;
    align-items: center;
    padding: 0 14px;
    font-family: Roboto, sans-serif;
}
.cell-name {
    width: 72px;
    color: #1f1f1f;
    font-size: 13px;
    direction: ltr;
    text-align: right;
}
.formula .sep {
    height: 17px;
    margin: 0 12px 0 9px;
}
.fx {
    color: #8f9296;
    font-family: "Liberation Serif", serif;
    font-size: 17px;
    font-style: italic;
}

/* Sheet */
.sheet {
    flex: 1;
    min-height: 0;
    display: flex;
}
.grid {
    flex: 1;
    min-width: 0;
    overflow: hidden;
}
table {
    width: 1426px;
    border-collapse: separate;
    border-spacing: 0;
    table-layout: fixed;
}
.c-num {
    width: 46px;
}
.c-a {
    width: 152px;
}
.c-b {
    width: 319px;
}
th, td {
    height: 27px;
    padding: 0 3px;
    border-right: 1px solid #e1e1e1;
    border-bottom: 1px solid #e1e1e1;
    overflow: hidden;
    white-space: nowrap;
}
th {
    border-color: #c4c7c5;
    font-family: "Liberation Sans", sans-serif;
    font-size: 11px;
    font-weight: 400;
}
thead th {
    position: relative;
    height: 25px;
    border-top: 1px solid #c4c7c5;
}
.corner {
    border-right: 4px solid #c4c7c5;
    border-bottom: 4px solid #c4c7c5;
    background: #f8f9fa;
}
.selected {
    background: #d3e3fd;
    color: #041e49;
    font-weight: 700;
}
.hide-mark, .show-mark {
    position: absolute;
    top: 8px;
    fill: #333;
}
.hide-mark {
    right: 5px;
}
.show-mark {
    left: 5px;
}
td {
    color: #000;
    font-family: "DejaVu Sans Condensed", sans-serif;
    font-size: 16px;
    line-height: 20px;
}
td:nth-child(3) {
    font-family: "Open Sans", sans-serif;
    font-size: 19px;
    line-height: 24px;
}
td:nth-child(4) {
    text-align: center;
}
td a {
    text-decoration: underline;
}
.cut th, .cut td {
    height: 11px;
}
.cut div {
    height: 10px;
    display: flex;
    align-items: flex-end;
    justify-content: flex-start;
    overflow: hidden;
}
.cut td:nth-child(4) div {
    justify-content: center;
}
.vscroll {
    width: 11px;
    flex: none;
    display: flex;
    flex-direction: column;
    border-left: 1px solid #e1e1e1;
}
.vtop {
    height: 25px;
    border-top: 1px solid #c4c7c5;
    border-bottom: 1px solid #c4c7c5;
    background: #f8f8f8;
}
.vthumb {
    width: 9px;
    height: 27px;
    margin: 19px 0 auto;
    border-radius: 5px;
    background: #dadce0;
}
.vscroll button {
    height: 16px;
    border-top: 1px solid #dcdcdc;
    background: #f8f8f8;
    fill: #80868b;
}
.hscroll {
    height: 13px;
    flex: none;
    display: flex;
    border-top: 1px solid #e1e1e1;
}
.hstart {
    width: 46px;
    border-right: 1px solid #e1e1e1;
    background: #f8f8f8;
}
.hthumb {
    width: 42%;
    height: 9px;
    margin: 1px auto 0 2px;
    border-radius: 5px;
    background: #dadce0;
}
.hscroll button {
    width: 16px;
    border-left: 1px solid #dcdcdc;
    background: #f8f8f8;
    fill: #80868b;
}
.hscroll button:last-child {
    margin-right: 11px;
}

/* Sheet tabs */
.sheetbar {
    height: 37px;
    flex: none;
    display: flex;
    padding: 0 39px 0 8px;
    border-top: 1px solid #e1e1e1;
    background: #f9fbfd;
    color: #444746;
}
.bar-btn {
    width: 40px;
}
.sheet-tab {
    gap: 10px;
    width: 81px;
    font-family: Roboto, "DejaVu Sans Condensed", sans-serif;
    font-size: 13px;
}
.sheet-tab.current {
    margin-right: 14px;
    background: #e1e9f7;
    color: #0b57d0;
    font-weight: 700;
}
.panel-toggle {
    margin-right: auto;
}

/* Taskbar */
.taskbar {
    height: 40px;
    flex: none;
    display: flex;
    background: linear-gradient(to right, #203a43, #20343f 60%, #1b2940);
    color: #fff;
}
.start {
    width: 48px;
}
.win-search {
    width: 288px;
    display: flex;
    align-items: center;
    padding-left: 11px;
    border: 1px solid #b8bcbf;
    background: #f2f2f2;
}
.win-search input {
    flex: 1;
    min-width: 0;
    padding-left: 10px;
    font-size: 14px;
}
.win-search input::placeholder {
    color: #333;
}
.castle {
    align-self: flex-end;
}
.apps {
    display: flex;
}
.app {
    width: 49px;
    border-bottom: 2px solid transparent;
}
.app.view {
    width: 50px;
}
.app:not(.view) svg {
    width: 24px;
    height: 24px;
}
.running {
    border-color: #76b9ed;
}
.open {
    background: #57656c;
}
.tray {
    display: flex;
    margin-left: auto;
}
.tray button {
    width: 24px;
}
.tray .weather {
    width: auto;
    margin-right: 18px;
    gap: 8px;
    font-size: 14px;
}
.weather .ar {
    font-size: 14px;
}
.tray .lang {
    width: 36px;
}
.tray .clock {
    width: 66px;
    flex-direction: column;
    font-size: 11px;
}
.clock span {
    line-height: 18px;
}
.tray .notes {
    width: 47px;
}
.tray .desktop-line {
    width: 5px;
    border-left: 1px solid #6a7585;
}

/* Overlays */
.activate {
    position: absolute;
    right: 63px;
    bottom: 73px;
    color: #bfbfbf;
}
.activate p {
    margin: 0;
    font-size: 19px;
    line-height: 24px;
}
.activate small {
    display: block;
    font-size: 14px;
    line-height: 20px;
}
.watermark {
    position: absolute;
    left: 50%;
    bottom: 15px;
    width: 164px;
    margin-left: -82px;
    display: flex;
    flex-direction: column;
    align-items: center;
    color: #c8c8c8;
    opacity: 0.5;
    pointer-events: none;
}
.watermark strong {
    font-family: "DejaVu Sans", sans-serif;
    font-size: 46px;
    line-height: 48px;
}
.watermark span {
    font-family: "Liberation Sans", sans-serif;
    font-size: 27px;
    font-weight: 700;
    line-height: 26px;
}
```
